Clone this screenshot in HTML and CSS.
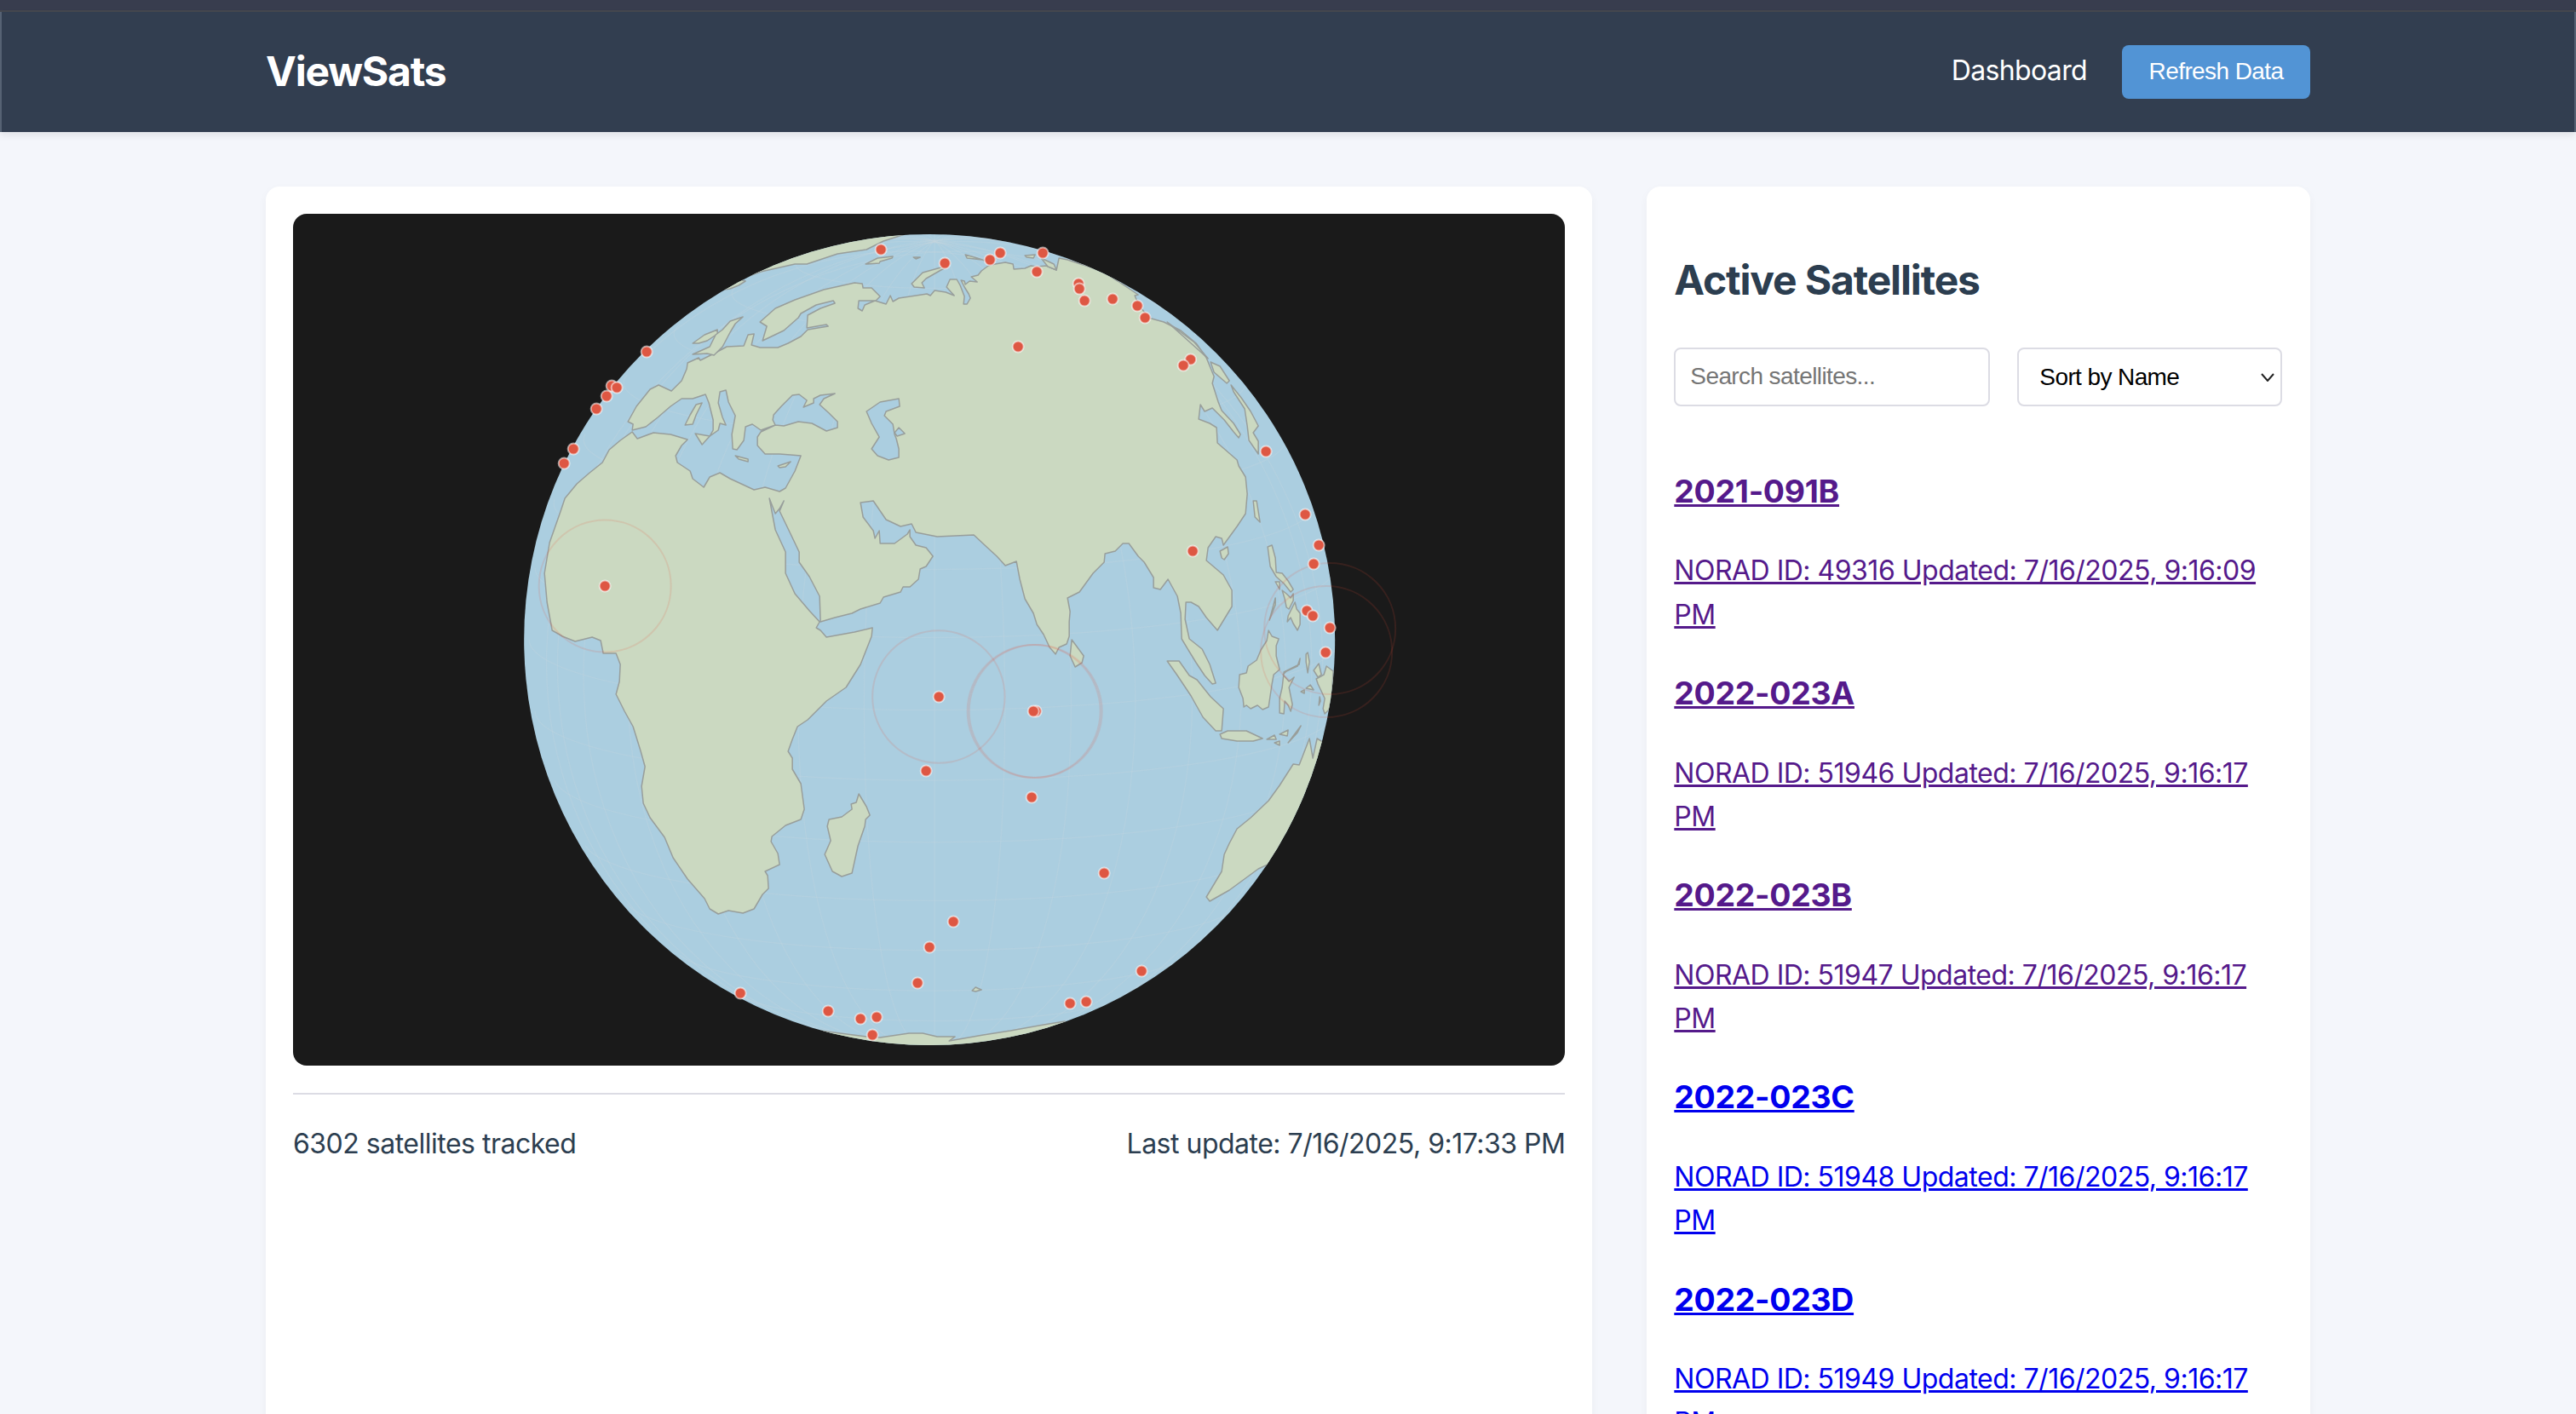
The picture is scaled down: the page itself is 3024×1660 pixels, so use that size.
FILE: index.html
```html
<!DOCTYPE html>
<html lang="en">
<head>
<meta charset="utf-8">
<title>ViewSats</title>
<link rel="stylesheet" href="styles.css">
</head>
<body>
<div class="strip"></div>
<header class="header">
  <div class="header-inner">
    <h1 class="logo">ViewSats</h1>
    <nav class="nav">
      <a class="nav-link" href="#">Dashboard</a>
      <button class="refresh" type="button">Refresh Data</button>
    </nav>
  </div>
</header>
<main class="layout">
  <section class="card">
    <div class="map">
      <svg class="globe" viewBox="344 251 1493 1000" xmlns="http://www.w3.org/2000/svg">
        <defs><clipPath id="earth"><circle cx="1091" cy="751" r="476"/></clipPath></defs>
        <circle class="ocean" cx="1091" cy="751" r="476"/>
        <g clip-path="url(#earth)">
          <g class="grid" transform="translate(6 0)">
            <path d="M615 751A476 82.6 0 0 0 1567 751"/>
            <path d="M622 667A469 81.4 0 1 0 1560 667"/>
            <path d="M645 585.7A447 77.6 0 1 0 1537 585.7"/>
            <path d="M681 509.3A412 71.6 0 1 0 1501 509.3"/>
            <path d="M730 440.2A365 63.3 0 1 0 1452 440.2"/>
            <path d="M792 380.7A306 53.1 0 1 0 1390 380.7"/>
            <path d="M864 332.4A238 41.3 0 1 0 1318 332.4"/>
            <path d="M948 296.6A163 28.3 0 1 0 1234 296.6"/>
            <path d="M622 834.9A469 81.4 0 0 0 1560 834.9"/>
            <path d="M645 916.3A447 77.6 0 0 0 1537 916.3"/>
            <path d="M681 992.7A412 71.6 0 0 0 1501 992.7"/>
            <path d="M730 1061.8A365 63.3 0 0 0 1452 1061.8"/>
            <path d="M792 1121.3A306 53.1 0 0 0 1390 1121.3"/>
            <path d="M864 1169.6A238 41.3 0 0 0 1318 1169.6"/>
            <path d="M948 1205.4A163 28.3 0 0 0 1234 1205.4"/>
            <path d="M1091 275V1227"/>
            <path d="M1076.4 275.2A81.4 476 -1.75 0 1 1105.6 1226.8"/>
            <path d="M1061 276A160.3 476 -3.6 0 1 1121 1226"/>
            <path d="M1043.5 277.4A234.4 476 -5.7 0 1 1138.5 1224.6"/>
            <path d="M1022.4 280A301.3 476 -8.3 0 1 1159.6 1222"/>
            <path d="M994.6 284.9A359 476 -11.7 0 1 1187.4 1217.1"/>
            <path d="M953.9 295A406 476 -16.7 0 1 1228.1 1207"/>
            <path d="M886.3 321.3A440.6 476 -25.5 0 1 1295.7 1180.7"/>
            <path d="M757.8 411.6A461.6 476 -44.6 0 1 1424.2 1090.4"/>
            <path d="M1105.6 275.2A81.4 476 1.75 0 0 1076.4 1226.8"/>
            <path d="M1121 276A160.3 476 3.6 0 0 1061 1226"/>
            <path d="M1138.5 277.4A234.4 476 5.7 0 0 1043.5 1224.6"/>
            <path d="M1159.6 280A301.3 476 8.3 0 0 1022.4 1222"/>
            <path d="M1187.4 284.9A359 476 11.7 0 0 994.6 1217.1"/>
            <path d="M1228.1 295A406 476 16.7 0 0 953.9 1207"/>
            <path d="M1295.7 321.3A440.6 476 25.5 0 0 886.3 1180.7"/>
            <path d="M1424.2 411.6A461.6 476 44.6 0 0 757.8 1090.4"/>
          </g>
          <g class="land">
            <path d="M648 740 660 747 675 753 695 748 705 752 708 767 723 767 728 780 727 800 723 815 733 835 743 853 752 882 757 900 753 923 755 943 763 960 780 983 790 1007 807 1032 827 1055 833 1067 843 1073 855 1069 872 1072 885 1067 895 1050 902 1043 901 1028 898 1023 915 1015 913 1002 905 988 906 982 922 969 940 962 944 950 940 920 930 903 930 890 925 882 930 868 936 853 948 845 970 823 993 807 1010 780 1023 747 1024 737 1003 742 970 748 963 740 958 737 962 730 950 717 933 697 922 673 922 648 910 622 903 585 910 603 915 597 920 588 915 600 928 627 938 648 938 660 950 677 962 700 963 730 980 725 1000 720 1010 715 1033 708 1037 701 1057 695 1060 689 1068 689 1078 680 1080 668 1087 665 1095 653 1087 643 1075 640 1068 630 1068 622 1065 627 1050 638 1033 638 1032 623 1027 632 1025 623 1013 607 1010 590 1025 588 1040 610 1057 618 1070 615 1075 625 1100 630 1143 628 1158 642 1170 653 1180 664 1193 659 1197 680 1203 703 1213 720 1217 733 1225 745 1232 760 1239 768 1243 760 1252 756 1255 747 1255 730 1256 718 1253 702 1267 695 1283 673 1296 660 1297 650 1309 647 1318 638 1325 638 1336 653 1343 660 1354 678 1354 690 1362 692 1371 680 1382 700 1386 720 1387 750 1396 765 1404 778 1414 793 1423 803 1427 802 1420 780 1411 762 1396 750 1391 727 1392 707 1398 707 1407 712 1416 725 1429 740 1446 712 1446 693 1436 675 1416 658 1418 643 1427 630 1434 632 1436 640 1452 618 1462 603 1464 580 1462 560 1454 547 1452 540 1429 520 1428 502 1420 497 1407 492 1409 475 1414 483 1423 479 1437 493 1448 507 1454 514 1456 510 1448 497 1434 482 1430 472 1423 450 1425 442 1416 420 1404 403 1386 388 1366 378 1348 373 1336 357 1332 347 1336 346 1312 330 1293 318 1253 305 1243 303 1240 317 1228 312 1217 313 1210 312 1203 315 1190 316 1189 310 1180 308 1168 310 1160 312 1152 318 1148 323 1140 325 1147 331 1138 330 1133 334 1132 330 1128 329 1132 337 1137 345 1139 350 1135 357 1131 357 1132 348 1127 335 1123 328 1115 328 1111 337 1120 347 1110 343 1097 341 1092 347 1088 345 1075 347 1055 350 1048 354 1045 347 1040 357 1027 353 1015 358 1012 365 1007 362 1008 353 1028 353 1033 348 1023 338 1013 338 1012 333 1003 332 967 340 933 352 910 362 892 378 900 383 895 400 920 388 937 373 940 368 958 358 978 353 980 356 963 362 948 370 947 385 970 381 972 383 948 387 940 395 925 403 913 408 892 408 882 405 885 392 878 393 873 406 853 407 840 414 822 423 820 420 807 426 806 433 800 447 788 459 773 452 763 457 747 477 737 495 743 498 742 505 758 501 772 490 787 477 800 468 813 468 828 463 832 473 837 493 837 505 833 512 843 505 845 497 852 499 848 490 843 473 845 460 852 458 855 472 863 488 859 510 860 527 865 528 873 517 875 501 883 498 893 505 910 499 907 493 908 487 917 477 930 464 938 463 947 470 943 478 955 473 955 468 963 464 980 462 967 468 962 475 973 485 983 495 983 502 970 506 953 497 937 495 920 500 910 499 893 507 889 513 889 523 898 533 915 533 928 534 940 535 933 553 922 573 915 577 898 572 885 575 870 568 857 562 845 555 833 560 826 572 813 562 810 553 795 543 793 535 800 523 807 516 787 510 767 508 748 515 742 507 728 517 715 528 707 543 692 555 677 568 663 585 658 600 645 637 639 673 642 707Z"/>
            <path d="M868 328 893 319 933 310 947 310 983 298 1017 293 1037 283 1062 275 1062 255 860 300Z"/>
            <path d="M1016 310 1030 303 1048 301 1047 303 1033 307 1032 309 1018 310Z"/>
            <path d="M1072 302 1080 302 1075 304Z"/>
            <path d="M850 340 853 332 865 327 875 330 867 335 857 339Z"/>
            <path d="M813 403 827 393 842 387 842 392 830 400 820 403Z"/>
            <path d="M813 416 833 407 840 393 848 387 857 377 872 372 863 380 857 390 848 407 838 417 830 415Z"/>
            <path d="M1070 333 1083 320 1108 313 1108 315 1087 327 1082 332 1085 338 1073 337Z"/>
            <path d="M1133 299 1147 303 1162 308 1153 305 1135 303Z"/>
            <path d="M1203 300 1215 299 1213 303 1205 302Z"/>
            <path d="M1222 303 1237 310 1240 317 1230 313Z"/>
            <path d="M1370 378 1402 402 1418 421 1398 403Z"/>
            <path d="M1421 425 1432 430 1443 447 1440 450 1425 437Z"/>
            <path d="M1445 452 1457 467 1468 483 1477 500 1471 508 1477 518 1477 533 1466 517 1464 500 1461 480 1448 460Z"/>
            <path d="M1471 588 1475 588 1479 613 1473 607Z"/>
            <path d="M1432 647 1441 642 1442 650 1437 657 1434 655Z"/>
            <path d="M1258 751 1272 770 1270 778 1262 783 1256 770Z"/>
            <path d="M816 509 833 512 824 522Z"/>
            <path d="M804 499 810 487 817 475 824 473 817 487 813 498Z"/>
            <path d="M863 535 878 539 878 542 867 539Z"/>
            <path d="M913 547 928 542 922 548 915 549Z"/>
            <path d="M1488 642 1493 640 1497 655 1498 672 1505 673 1512 682 1518 692 1515 695 1507 685 1498 677 1491 665Z"/>
            <path d="M1497 683 1502 683 1502 692Z"/>
            <path d="M1505 693 1510 697 1515 702 1518 697 1518 705 1513 715 1510 713 1508 703Z"/>
            <path d="M1515 717 1520 707 1522 715 1526 720 1526 733 1523 740 1518 732 1515 725 1511 730 1512 723Z"/>
            <path d="M1497 702 1497 710 1490 728 1493 717Z"/>
            <path d="M1489 740 1493 747 1501 750 1498 758 1498 770 1502 786 1495 792 1493 803 1489 830 1482 833 1476 828 1468 832 1463 828 1460 830 1459 820 1454 807 1455 792 1463 790 1465 782 1475 775 1480 763 1487 752Z"/>
            <path d="M1507 789 1525 780 1526 773 1523 782 1510 788 1506 792 1513 800 1519 795 1513 807 1517 827 1515 835 1512 828 1508 823 1507 838 1502 837 1502 820 1505 807Z"/>
            <path d="M1533 768 1535 766 1537 777 1535 790 1533 777Z"/>
            <path d="M1542 787 1548 779 1551 792 1547 795Z"/>
            <path d="M1557 782 1565 788 1563 820 1560 833 1555 838 1553 832 1555 820 1547 803 1545 797 1554 792Z"/>
            <path d="M1533 808 1538 804 1542 810Z"/>
            <path d="M1527 812 1531 810 1531 814Z"/>
            <path d="M1548 828 1549 818 1550 823Z"/>
            <path d="M1370 776 1384 776 1396 793 1405 798 1421 818 1436 832 1434 858 1427 858 1412 842 1398 817 1382 793Z"/>
            <path d="M1432 862 1441 858 1463 858 1482 867 1471 870 1452 870 1434 867Z"/>
            <path d="M1487 868 1496 863 1498 868Z"/>
            <path d="M1502 862 1512 857 1511 864Z"/>
            <path d="M1512 872 1527 852 1523 860Z"/>
            <path d="M1496 872 1502 870 1502 875Z"/>
            <path d="M1537 867 1525 898 1518 897 1502 922 1489 940 1468 960 1452 973 1443 990 1437 1003 1434 1023 1416 1053 1420 1058 1443 1045 1477 1020 1520 1000 1600 900 1546 867 1541 890Z"/>
            <path d="M1008 932 1017 947 1021 957 1016 962 1015 970 1007 993 1000 1025 988 1029 977 1023 968 1003 975 987 971 970 973 962 988 959 1000 950 999 944 1005 942Z"/>
            <path d="M1141 1163 1145 1159 1152 1162 1145 1164Z"/>
            <path d="M963 1210 1017 1217 1033 1218 1067 1213 1083 1213 1100 1217 1121 1217 1114 1222 1154 1215 1186 1210 1225 1203 1250 1199 1250 1240 963 1240Z"/>
          </g>
          <g class="water">
            <path d="M1017 483 1033 472 1055 468 1056 477 1040 483 1038 488 1048 498 1050 510 1052 515 1055 527 1055 537 1043 540 1030 535 1023 527 1032 513 1023 497Z"/>
            <path d="M1050 508 1055 502 1062 509 1053 512Z"/>
          </g>
        </g>
        <g class="coverage">
          <circle cx="710" cy="688" r="77.5"/>
          <circle cx="1101.7" cy="818" r="77.7"/>
          <circle cx="1213.5" cy="835" r="78"/>
          <circle cx="1215.5" cy="835" r="78"/>
          <circle cx="1561" cy="738" r="77"/>
          <circle cx="1557" cy="765" r="77"/>
        </g>
        <g class="sats">
          <circle cx="1034" cy="293" r="6.5"/><circle cx="759" cy="413" r="6.5"/><circle cx="718" cy="453" r="6.5"/><circle cx="724" cy="455" r="6.5"/><circle cx="712" cy="465" r="6.5"/><circle cx="700" cy="480" r="6.5"/><circle cx="673" cy="527" r="6.5"/><circle cx="662" cy="544" r="6.5"/><circle cx="710" cy="688" r="6.5"/>
          <circle cx="1109" cy="309" r="6.5"/><circle cx="1174" cy="297" r="6.5"/><circle cx="1162" cy="305" r="6.5"/><circle cx="1224" cy="297" r="6.5"/><circle cx="1217" cy="319" r="6.5"/><circle cx="1266" cy="333" r="6.5"/><circle cx="1267" cy="339" r="6.5"/><circle cx="1273" cy="353" r="6.5"/><circle cx="1306" cy="351" r="6.5"/><circle cx="1335" cy="359" r="6.5"/><circle cx="1344" cy="373" r="6.5"/><circle cx="1195" cy="407" r="6.5"/><circle cx="1397.5" cy="422" r="6.5"/><circle cx="1389" cy="429" r="6.5"/><circle cx="1486" cy="530" r="6.5"/><circle cx="1532" cy="604" r="6.5"/><circle cx="1548" cy="640" r="6.5"/><circle cx="1542" cy="662" r="6.5"/><circle cx="1400" cy="647" r="6.5"/><circle cx="1534" cy="717" r="6.5"/><circle cx="1541" cy="723" r="6.5"/><circle cx="1561" cy="737" r="6.5"/><circle cx="1556" cy="766" r="6.5"/>
          <circle cx="1216" cy="835" r="6.5"/><circle cx="1213" cy="835" r="6.5"/><circle cx="1102" cy="818" r="6.5"/><circle cx="1211" cy="936" r="6.5"/><circle cx="1296" cy="1025" r="6.5"/><circle cx="1119" cy="1082" r="6.5"/><circle cx="1340" cy="1140" r="6.5"/><circle cx="1256" cy="1178" r="6.5"/><circle cx="1275" cy="1176" r="6.5"/>
          <circle cx="1087" cy="905" r="6.5"/><circle cx="1091" cy="1112" r="6.5"/><circle cx="1077" cy="1154" r="6.5"/><circle cx="869" cy="1166" r="6.5"/><circle cx="972" cy="1187" r="6.5"/><circle cx="1010" cy="1196" r="6.5"/><circle cx="1029" cy="1194" r="6.5"/><circle cx="1024" cy="1215" r="6.5"/>
        </g>
      </svg>
    </div>
    <div class="status">
      <span>6302 satellites tracked</span>
      <span>Last update: 7/16/2025, 9:17:33 PM</span>
    </div>
  </section>
  <aside class="card">
    <h2 class="list-title">Active Satellites</h2>
    <div class="controls">
      <input class="field search" type="text" placeholder="Search satellites...">
      <div class="select-wrap">
        <select class="field sort">
          <option>Sort by Name</option>
          <option>Sort by NORAD ID</option>
        </select>
        <svg class="chevron" viewBox="0 0 16 10" xmlns="http://www.w3.org/2000/svg"><path d="M1 1 8 9 15 1"/></svg>
      </div>
    </div>
    <div class="sat-list">
      <a class="sat seen" href="#"><h3>2021-091B</h3><p>NORAD ID: 49316 Updated: 7/16/2025, 9:16:09 PM</p></a>
      <a class="sat seen" href="#"><h3>2022-023A</h3><p>NORAD ID: 51946 Updated: 7/16/2025, 9:16:17 PM</p></a>
      <a class="sat seen" href="#"><h3>2022-023B</h3><p>NORAD ID: 51947 Updated: 7/16/2025, 9:16:17 PM</p></a>
      <a class="sat" href="#"><h3>2022-023C</h3><p>NORAD ID: 51948 Updated: 7/16/2025, 9:16:17 PM</p></a>
      <a class="sat" href="#"><h3>2022-023D</h3><p>NORAD ID: 51949 Updated: 7/16/2025, 9:16:17 PM</p></a>
    </div>
  </aside>
</main>
</body>
</html>
```

FILE: styles.css
```css
* { box-sizing: border-box; }
html, body { margin: 0; height: 100%; overflow: hidden; }
body {
  background: #f4f6fb;
  color: #2c3e50;
  font-family: Inter, "Liberation Sans", sans-serif;
  font-size: 32px;
  line-height: 1.6;
  letter-spacing: -0.5px;
}
.strip {
  height: 14px;
  background: #383d4e;
  border-bottom: 2px solid #45484f;
}
.header {
  background: #323e50;
  border-inline: 2px solid #566273;
  box-shadow: 0 4px 8px rgba(0, 0, 0, 0.08);
  padding: 32px 0;
  position: relative;
}
.header-inner {
  width: 2400px;
  margin: 0 auto;
  display: flex;
  justify-content: space-between;
  align-items: center;
}
.logo { margin: 0; font-size: 48px; font-weight: 700; color: #fff; letter-spacing: -1.2px; }
.nav { display: flex; align-items: center; gap: 41px; }
.nav-link { color: #fff; text-decoration: none; margin-bottom: 4px; letter-spacing: -0.64px; }
.refresh {
  background: #5294d5;
  color: #fff;
  border: 0;
  border-radius: 8px;
  width: 221px;
  height: 63px;
  padding: 0;
  font-family: "Liberation Sans", Arial, sans-serif;
  font-size: 28px;
  letter-spacing: -0.6px;
}
.layout {
  width: 2400px;
  margin: 64px auto 0;
  display: grid;
  grid-template-columns: 2fr 1fr;
  gap: 64px;
}
.card {
  background: #fff;
  border-radius: 16px;
  padding: 32px;
  box-shadow: 0 4px 12px rgba(0, 0, 0, 0.04);
}
.map {
  height: 1000px;
  background: #1a1a1a;
  border-radius: 16px;
  overflow: hidden;
}
.globe { display: block; width: 100%; height: 100%; }
.ocean { fill: #abcee0; }
.grid path { fill: none; stroke: #c8d6e0; stroke-opacity: 0.25; stroke-width: 1.5; }
.land path { fill: #cbd9c1; stroke: #989e9b; stroke-width: 1.5; stroke-linejoin: round; }
.water path { fill: #abcee0; stroke: #989e9b; stroke-width: 1.5; stroke-linejoin: round; }
.coverage circle { fill: none; stroke: #e74c3c; stroke-opacity: 0.14; stroke-width: 2; }
.sats circle { fill: #de5743; stroke: #fff; stroke-opacity: 0.55; stroke-width: 2; }
.status {
  margin-top: 32px;
  padding-top: 32px;
  border-top: 2px solid #dcdce4;
  display: flex;
  justify-content: space-between;
}
.list-title { margin: 40px 0; font-size: 48px; font-weight: 700; letter-spacing: -1.15px; }
.controls { display: flex; gap: 32px; margin-bottom: 33px; }
.field {
  height: 69px;
  border: 2px solid #dcdce4;
  border-radius: 8px;
  background: #fff;
  font-family: "Liberation Sans", Arial, sans-serif;
  font-size: 28px;
  letter-spacing: -0.6px;
  color: #000;
}
.search { width: 371px; padding: 0 17px; }
.search::placeholder { color: #757575; }
.select-wrap { position: relative; width: 311px; }
.sort { width: 100%; padding: 0 24px; appearance: none; }
.chevron {
  position: absolute;
  right: 9px;
  top: 30px;
  width: 16px;
  height: 10px;
  pointer-events: none;
}
.chevron path { fill: none; stroke: #222; stroke-width: 2; }
.sat { display: block; color: #0000ee; text-decoration: underline; }
.sat.seen { color: #551a8b; }
.sat h3 { margin: 37.44px 0; font-size: 37.44px; font-weight: 700; letter-spacing: -0.3px; }
.sat p { margin: 32px 0; }
.sat-list { display: flow-root; }
```
